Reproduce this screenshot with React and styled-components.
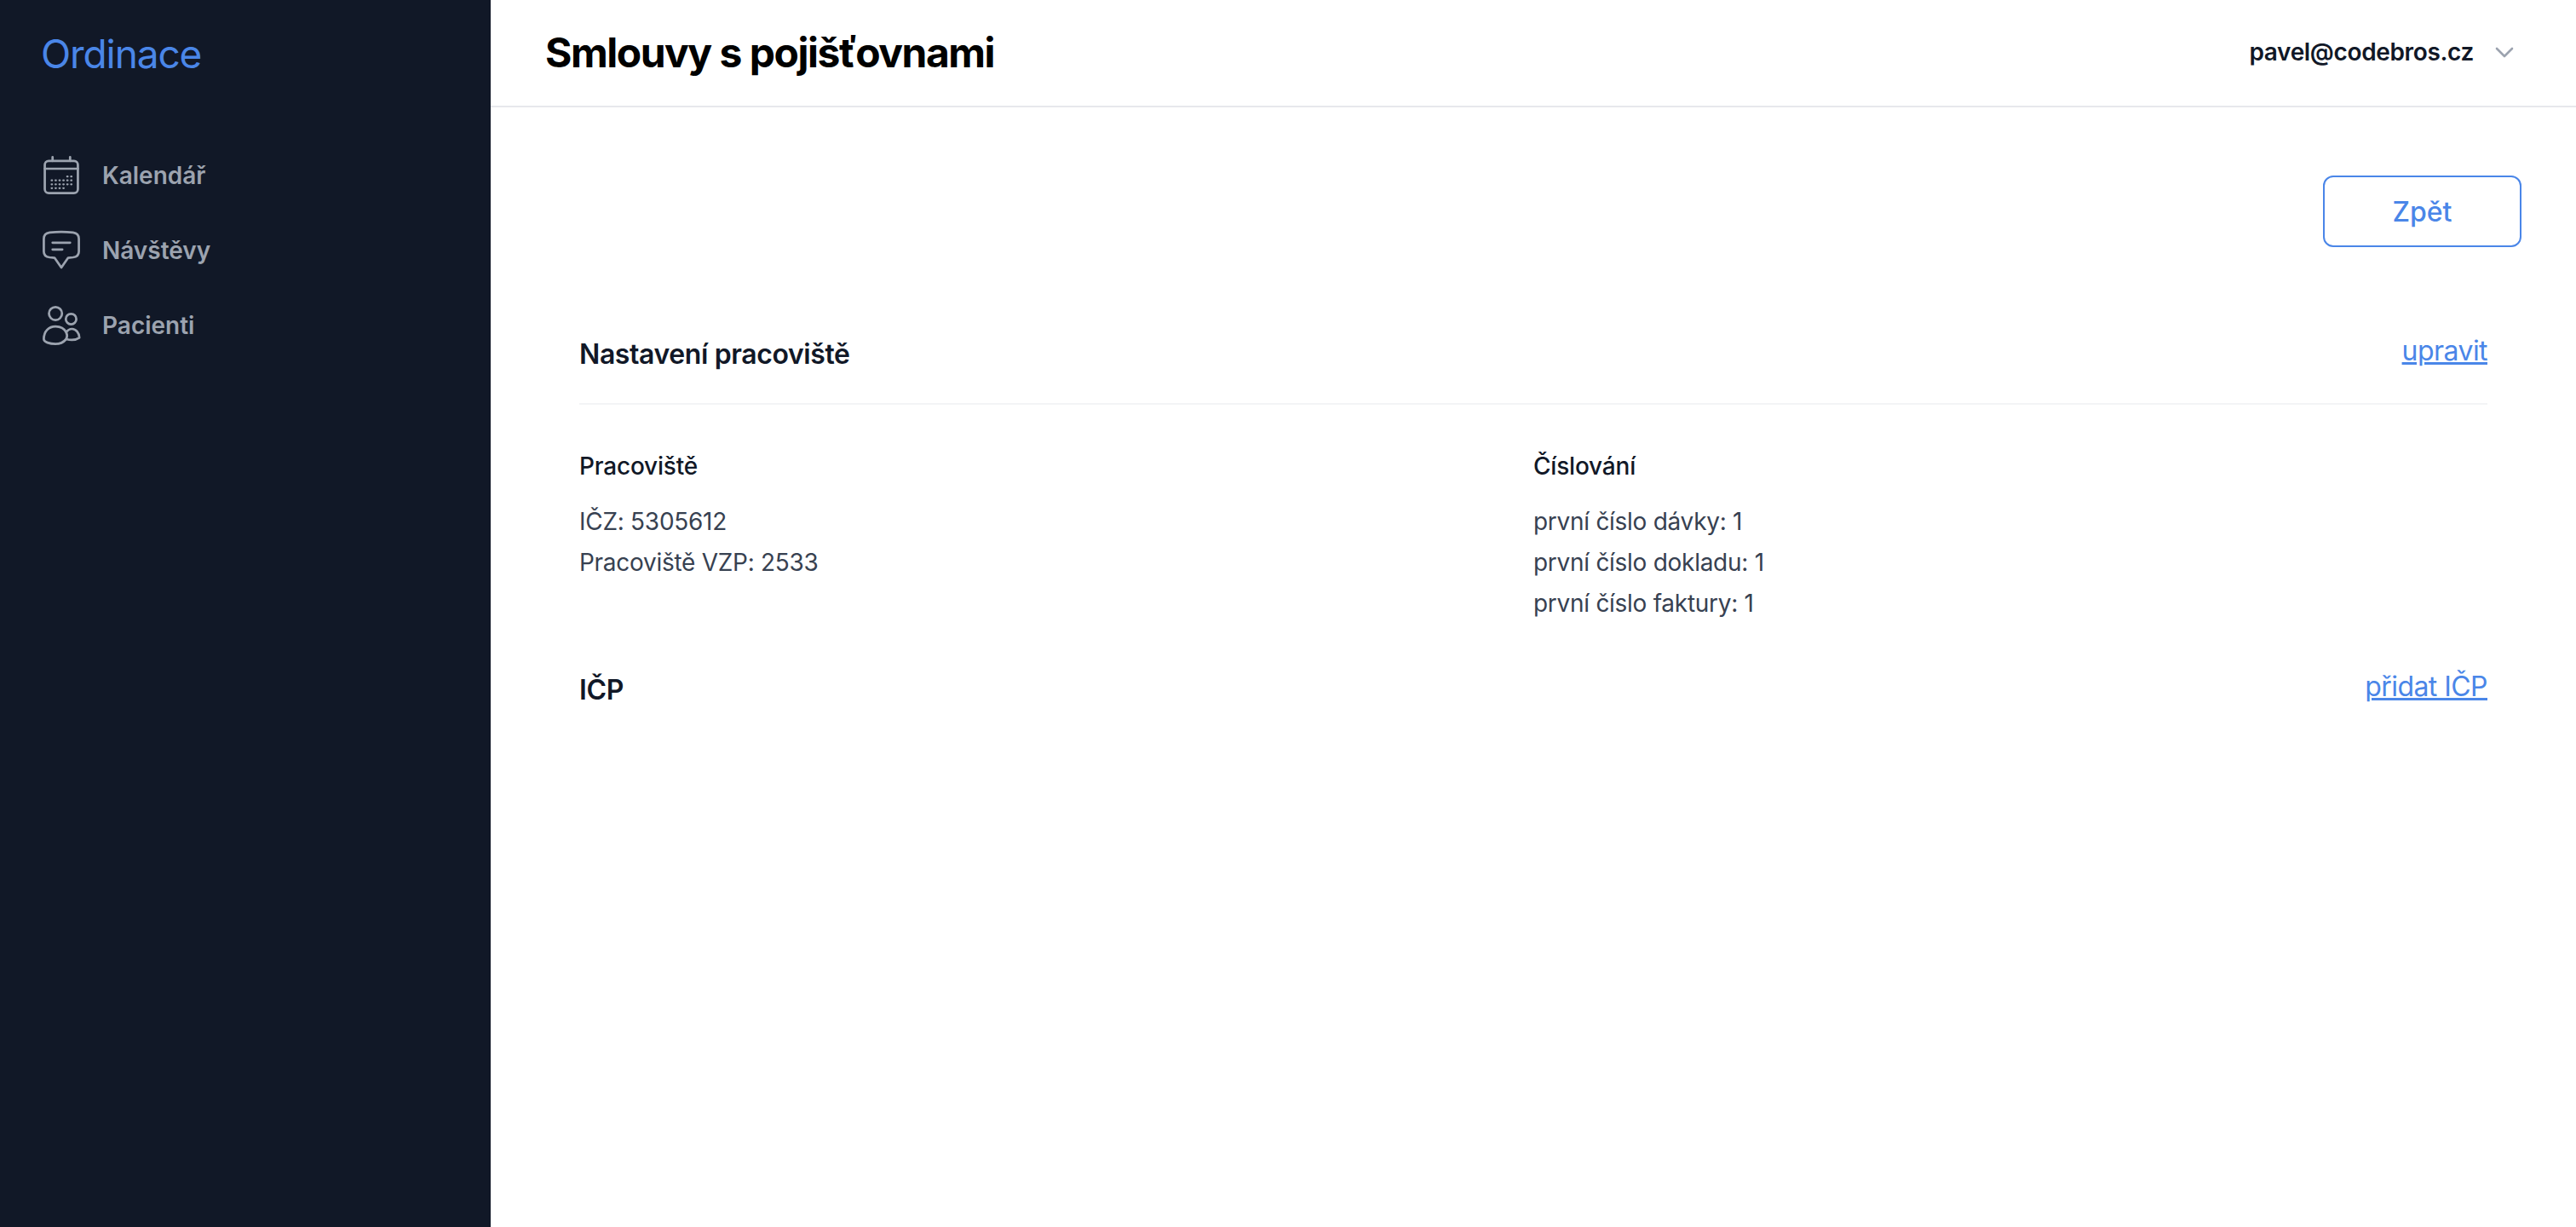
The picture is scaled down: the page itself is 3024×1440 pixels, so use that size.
import React from 'react';
import styled, { createGlobalStyle } from 'styled-components';

const GlobalStyle = createGlobalStyle`
  * {
    box-sizing: border-box;
  }
  html, body {
    margin: 0;
    background: #fff;
    font-family: Inter, "Liberation Sans", sans-serif;
  }
`;

const Page = styled.div`
  display: flex;
  height: 1440px;
`;

const Sidebar = styled.aside`
  width: 576px;
  flex-shrink: 0;
  background: #111827;
  padding: 0 48px;
`;

const Logo = styled.div`
  height: 126px;
  display: flex;
  align-items: center;
  font-size: 46px;
  font-weight: 400;
  letter-spacing: -1.1px;
  color: #4a86e8;
`;

const Nav = styled.nav`
  display: flex;
  flex-direction: column;
  gap: 24px;
  margin-top: 48px;
`;

const NavItem = styled.a`
  display: flex;
  align-items: center;
  gap: 24px;
  height: 64px;
  font-size: 28px;
  font-weight: 600;
  color: #9ca3af;

  svg {
    width: 48px;
    height: 48px;
    flex-shrink: 0;
  }
`;

const Main = styled.main`
  flex: 1;
  display: flex;
  flex-direction: column;
`;

const Header = styled.header`
  height: 126px;
  flex-shrink: 0;
  display: flex;
  align-items: center;
  justify-content: space-between;
  padding: 0 64px 2px;
  background: #fff;
  border-bottom: 2px solid #e7e8ec;
`;

const Title = styled.h1`
  margin: 0;
  font-size: 48px;
  font-weight: 700;
  letter-spacing: -1.5px;
  color: #000;
`;

const User = styled.div`
  display: flex;
  align-items: center;
  gap: 20px;
  padding-right: 4px;
  font-size: 28px;
  font-weight: 600;
  letter-spacing: -0.35px;
  color: #111827;

  svg {
    width: 32px;
    height: 32px;
    color: #9ca3af;
  }
`;

const Content = styled.div`
  padding: 80px 64px 0;
`;

const Actions = styled.div`
  display: flex;
  justify-content: flex-end;
`;

const BackButton = styled.button`
  width: 233px;
  height: 84px;
  background: #fff;
  border: 2px solid #4a86e8;
  border-radius: 12px;
  font-family: inherit;
  font-size: 32px;
  font-weight: 500;
  color: #4a86e8;
`;

const Section = styled.section`
  padding: 0 40px;
`;

const SectionHead = styled.div`
  display: flex;
  justify-content: space-between;
  align-items: flex-start;
  height: ${(p) => p.$height}px;
  padding-top: ${(p) => p.$top}px;
  ${(p) => p.$ruled && 'border-bottom: 2px solid #f3f4f6;'}
`;

const SectionTitle = styled.h2`
  margin: 4px 0 0;
  font-size: 32px;
  font-weight: 600;
  letter-spacing: -0.4px;
  color: #111827;
`;

const EditLink = styled.a`
  font-size: 32px;
  letter-spacing: -0.55px;
  color: #4a86e8;
  text-decoration: underline;
  text-decoration-thickness: 3px;
`;

const Columns = styled.div`
  display: grid;
  grid-template-columns: 1fr 1fr;
  padding-top: 48px;
`;

const ColumnTitle = styled.h3`
  margin: 0 0 17px;
  font-size: 28px;
  line-height: 48px;
  font-weight: 500;
  letter-spacing: -0.2px;
  color: #111827;
`;

const Line = styled.div`
  font-size: 28px;
  line-height: 48px;
  letter-spacing: -0.28px;
  color: #374151;
`;

const CalendarIcon = () => (
  <svg viewBox="0 0 42 42" fill="none" stroke="currentColor" strokeWidth="2.4" strokeLinecap="round">
    <rect x="4" y="6" width="34" height="33" rx="4" />
    <path d="M4 14h34M12 2v4M30 2v4" />
    <path
      d="M27 22h.5M31 22h.5M19 26h.5M23 26h.5M27 26h.5M31 26h.5M11 26h.5M15 26h.5M11 30h.5M15 30h.5M19 30h.5M23 30h.5M27 30h.5M31 30h.5M11 34h.5M15 34h.5M19 34h.5M23 34h.5"
      strokeWidth="2"
    />
  </svg>
);

const ChatIcon = () => (
  <svg viewBox="0 0 42 42" fill="none" stroke="currentColor" strokeWidth="2.4" strokeLinecap="round" strokeLinejoin="round">
    <path d="M3 9c0-4 2-6 6-6.500 8-.8 16-.8 24 0 4 .5 6 2.500 6 6.500v13c0 4-2 5.500-6 6l-5 .5-7 10-7-10-5-.5c-4-.5-6-2-6-6z" />
    <path d="M12 13h18M12 20h10" />
  </svg>
);

const UsersIcon = () => (
  <svg viewBox="0 0 42 42" fill="none" stroke="currentColor" strokeWidth="2.4" strokeLinecap="round" strokeLinejoin="round">
    <circle cx="15" cy="8.700" r="6.700" />
    <circle cx="31" cy="14.400" r="5.400" />
    <path d="M3 35C3 27 8 22 15 22C20 22 24 24 26 28C28 25 30 24.500 32 24.500C36 24.500 39.500 29 39.500 33.500C36 36 30 36 26 35C23 38.500 19 40 15 40C9 40 3 38 3 35Z" />
    <path d="M26 28C27 30 27 33 26 35" />
  </svg>
);

const ChevronIcon = () => (
  <svg viewBox="0 0 32 32" fill="none" stroke="currentColor" strokeWidth="2.6" strokeLinecap="round" strokeLinejoin="round">
    <path d="M7 12l9 9 9-9" />
  </svg>
);

const navItems = [
  { label: 'Kalendář', icon: <CalendarIcon /> },
  { label: 'Návštěvy', icon: <ChatIcon /> },
  { label: 'Pacienti', icon: <UsersIcon /> },
];

const App = () => {
  return (
    <Page>
      <GlobalStyle />
      <Sidebar>
        <Logo>Ordinace</Logo>
        <Nav>
          {navItems.map((item) => (
            <NavItem key={item.label}>
              {item.icon}
              {item.label}
            </NavItem>
          ))}
        </Nav>
      </Sidebar>
      <Main>
        <Header>
          <Title>Smlouvy s pojišťovnami</Title>
          <User>
            pavel@codebros.cz
            <ChevronIcon />
          </User>
        </Header>
        <Content>
          <Actions>
            <BackButton>Zpět</BackButton>
          </Actions>
          <Section>
            <SectionHead $height={185} $top={102} $ruled>
              <SectionTitle>Nastavení pracoviště</SectionTitle>
              <EditLink>upravit</EditLink>
            </SectionHead>
            <Columns>
              <div>
                <ColumnTitle>Pracoviště</ColumnTitle>
                <Line>IČZ: 5305612</Line>
                <Line>Pracoviště VZP: 2533</Line>
              </div>
              <div>
                <ColumnTitle>Číslování</ColumnTitle>
                <Line>první číslo dávky: 1</Line>
                <Line>první číslo dokladu: 1</Line>
                <Line>první číslo faktury: 1</Line>
              </div>
            </Columns>
            <SectionHead $height={130} $top={54}>
              <SectionTitle>IČP</SectionTitle>
              <EditLink>přidat IČP</EditLink>
            </SectionHead>
          </Section>
        </Content>
      </Main>
    </Page>
  );
};

export default App;
